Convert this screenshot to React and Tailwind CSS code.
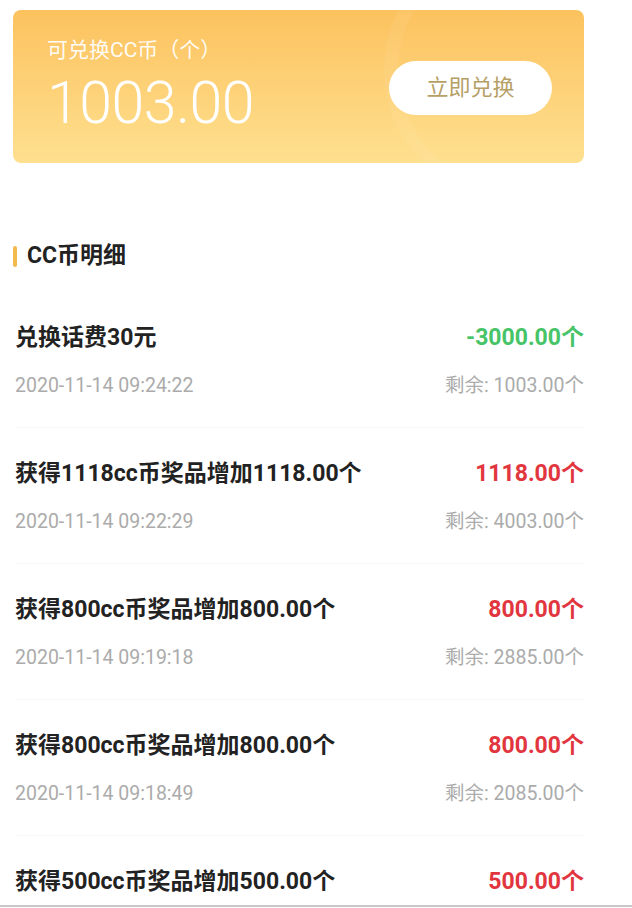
import React from 'react';

const records = [
  { title: '兑换话费30元', amount: '-3000.00个', time: '2020-11-14 09:24:22', left: '1003.00个', plus: false },
  { title: '获得1118cc币奖品增加1118.00个', amount: '1118.00个', time: '2020-11-14 09:22:29', left: '4003.00个', plus: true },
  { title: '获得800cc币奖品增加800.00个', amount: '800.00个', time: '2020-11-14 09:19:18', left: '2885.00个', plus: true },
  { title: '获得800cc币奖品增加800.00个', amount: '800.00个', time: '2020-11-14 09:18:49', left: '2085.00个', plus: true },
  // last row only shows its title above the tab bar
  { title: '获得500cc币奖品增加500.00个', amount: '500.00个', plus: true },
];

export default function App() {
  return (
    <div
      className="w-[632px] h-[908px] bg-white overflow-hidden flex flex-col"
      style={{ fontFamily: "Roboto, 'Noto Sans CJK SC', sans-serif" }}
    >
      <div className="flex-1 overflow-hidden w-[584px] pl-[13px]">
        {/* Balance card */}
        <div className="relative mt-[10px] h-[153px] rounded-lg overflow-hidden bg-gradient-to-b from-[#fcc25e] to-[#fee08f] flex items-center justify-between pl-[34px] pr-[32px]">
          <div className="absolute -right-[60px] -top-[70px] w-[260px] h-[260px] rounded-full border-[14px] border-white/[0.06]" />
          <div className="relative flex flex-col mb-[4px]">
            <p className="text-[21px] leading-[26px] text-white/95 mb-[10px]">可兑换CC币（个）</p>
            <p className="text-[59px] leading-[60px] font-light text-white tracking-[-0.5px]">1003.00</p>
          </div>
          <button className="relative mt-[2px] w-[163px] h-[54px] rounded-full bg-white text-[22px] text-[#b6a066]">
            立即兑换
          </button>
        </div>

        {/* Section header */}
        <div className="flex items-center gap-[10px] mt-[78px] h-[30px]">
          <span className="w-[4px] h-[21px] rounded-sm bg-[#f2b94f]" />
          <span className="text-[23px] font-bold text-[#222]">CC币明细</span>
        </div>

        {/* Records */}
        <div className="mt-[21px] pl-[2px]">
          {records.map((r, i) => (
            <div key={i} className="pt-[31px] pb-[28px] border-b border-[#f7f7f7]">
              <div className="flex justify-between items-center h-[30px]">
                <p className="text-[23px] font-bold text-[#222]">{r.title}</p>
                <p className={`text-[23px] font-bold ${r.plus ? 'text-[#e2363f]' : 'text-[#47c467]'}`}>{r.amount}</p>
              </div>
              {r.time && (
                <div className="flex justify-between items-center h-[26px] mt-[20px] text-[19.5px] text-[#ababab]">
                  <p>{r.time}</p>
                  <p>剩余: {r.left}</p>
                </div>
              )}
            </div>
          ))}
        </div>
      </div>
      <div className="h-[3px] border-t-2 border-[#c8c8c8] bg-white" />
    </div>
  );
}
